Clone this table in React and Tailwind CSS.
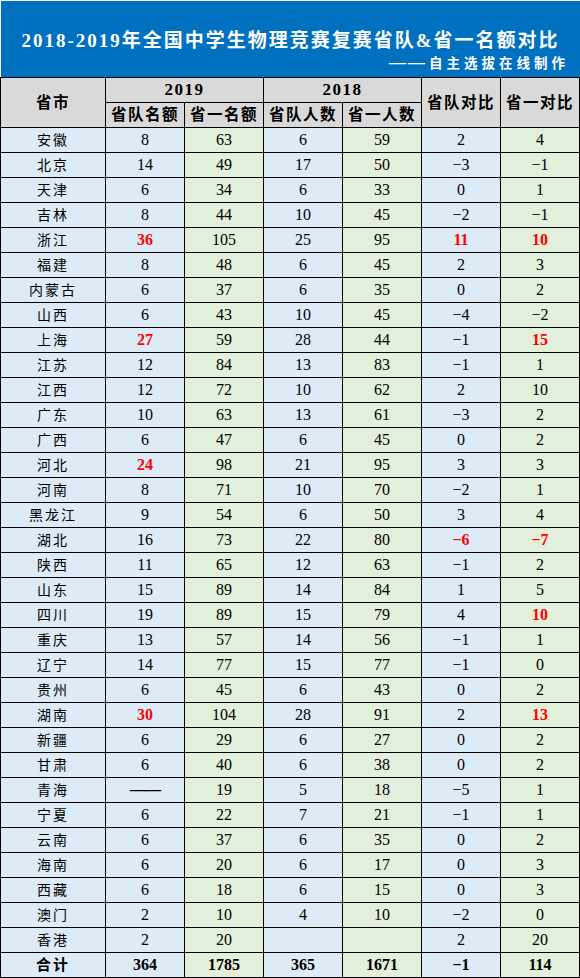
const rows = [
  ["安徽", "8", "63", "6", "59", "2", "4"],
  ["北京", "14", "49", "17", "50", "−3", "−1"],
  ["天津", "6", "34", "6", "33", "0", "1"],
  ["吉林", "8", "44", "10", "45", "−2", "−1"],
  ["浙江", "!36", "105", "25", "95", "!11", "!10"],
  ["福建", "8", "48", "6", "45", "2", "3"],
  ["内蒙古", "6", "37", "6", "35", "0", "2"],
  ["山西", "6", "43", "10", "45", "−4", "−2"],
  ["上海", "!27", "59", "28", "44", "−1", "!15"],
  ["江苏", "12", "84", "13", "83", "−1", "1"],
  ["江西", "12", "72", "10", "62", "2", "10"],
  ["广东", "10", "63", "13", "61", "−3", "2"],
  ["广西", "6", "47", "6", "45", "0", "2"],
  ["河北", "!24", "98", "21", "95", "3", "3"],
  ["河南", "8", "71", "10", "70", "−2", "1"],
  ["黑龙江", "9", "54", "6", "50", "3", "4"],
  ["湖北", "16", "73", "22", "80", "!−6", "!−7"],
  ["陕西", "11", "65", "12", "63", "−1", "2"],
  ["山东", "15", "89", "14", "84", "1", "5"],
  ["四川", "19", "89", "15", "79", "4", "!10"],
  ["重庆", "13", "57", "14", "56", "−1", "1"],
  ["辽宁", "14", "77", "15", "77", "−1", "0"],
  ["贵州", "6", "45", "6", "43", "0", "2"],
  ["湖南", "!30", "104", "28", "91", "2", "!13"],
  ["新疆", "6", "29", "6", "27", "0", "2"],
  ["甘肃", "6", "40", "6", "38", "0", "2"],
  ["青海", "——", "19", "5", "18", "−5", "1"],
  ["宁夏", "6", "22", "7", "21", "−1", "1"],
  ["云南", "6", "37", "6", "35", "0", "2"],
  ["海南", "6", "20", "6", "17", "0", "3"],
  ["西藏", "6", "18", "6", "15", "0", "3"],
  ["澳门", "2", "10", "4", "10", "−2", "0"],
  ["香港", "2", "20", "", "", "2", "20"],
];

const total = ["合计", "364", "1785", "365", "1671", "−1", "114"];

const colBg = [
  "bg-[#ddebf7]",
  "bg-[#ddebf7]",
  "bg-[#e2efda]",
  "bg-[#ddebf7]",
  "bg-[#e2efda]",
  "bg-[#ddebf7]",
  "bg-[#e2efda]",
];

const cell = "flex items-center justify-center border-r border-b border-black h-[25px]";
const head = "flex items-center justify-center border-r border-b border-black bg-[#d9d9d9] font-bold text-[15.5px] tracking-[1.5px]";

const Cell = ({ value, i }) => {
  const red = value.startsWith("!");
  const text = red ? value.slice(1) : value;
  return (
    <div
      className={`${cell} ${colBg[i]} ${
        i === 0 ? "text-[14px] tracking-[2px]" : "text-[16px]"
      } ${red ? "text-[#ff0000] font-bold" : "text-black"}`}
    >
      {text === "——" ? <span className="font-bold tracking-[-1px]">——</span> : text}
    </div>
  );
};

export default function App() {
  return (
    <div
      className="w-[580px] bg-white"
      style={{ fontFamily: "'Liberation Serif', 'Noto Sans CJK SC', serif" }}
    >
      <div className="h-[77px] bg-[#0070c0] border-t border-l border-white flex flex-col text-white pt-[28px]">
        <div className="text-center font-bold text-[19px] tracking-[2px] leading-[24px]">
          2018-2019年全国中学生物理竞赛复赛省队&amp;省一名额对比
        </div>
        <div className="text-right font-bold text-[13.5px] tracking-[4px] leading-[18px] mt-[1px] pr-[11px]">
          <span className="text-[17px] tracking-[2px]">——</span>
          <span className="ml-[2px]">自主选拔在线制作</span>
        </div>
      </div>

      <div className="grid grid-cols-[105px_repeat(6,79px)] grid-rows-[25px_25px] border-l border-t border-black">
        <div className={`${head} row-span-2`}>省市</div>
        <div className={`${head} col-span-2 text-[17px]`}>2019</div>
        <div className={`${head} col-span-2 text-[17px]`}>2018</div>
        <div className={`${head} row-span-2`}>省队对比</div>
        <div className={`${head} row-span-2`}>省一对比</div>
        <div className={head}>省队名额</div>
        <div className={head}>省一名额</div>
        <div className={head}>省队人数</div>
        <div className={head}>省一人数</div>
      </div>

      <div className="grid grid-cols-[105px_repeat(6,79px)] border-l border-black">
        {rows.map((r) =>
          r.map((v, i) => <Cell key={r[0] + i} value={v} i={i} />)
        )}
        {total.map((v, i) => (
          <div
            key={"t" + i}
            className={`${cell} ${colBg[i]} font-bold text-black ${
              i === 0 ? "text-[15px] tracking-[2px]" : "text-[16px]"
            }`}
          >
            {v}
          </div>
        ))}
      </div>
    </div>
  );
}
